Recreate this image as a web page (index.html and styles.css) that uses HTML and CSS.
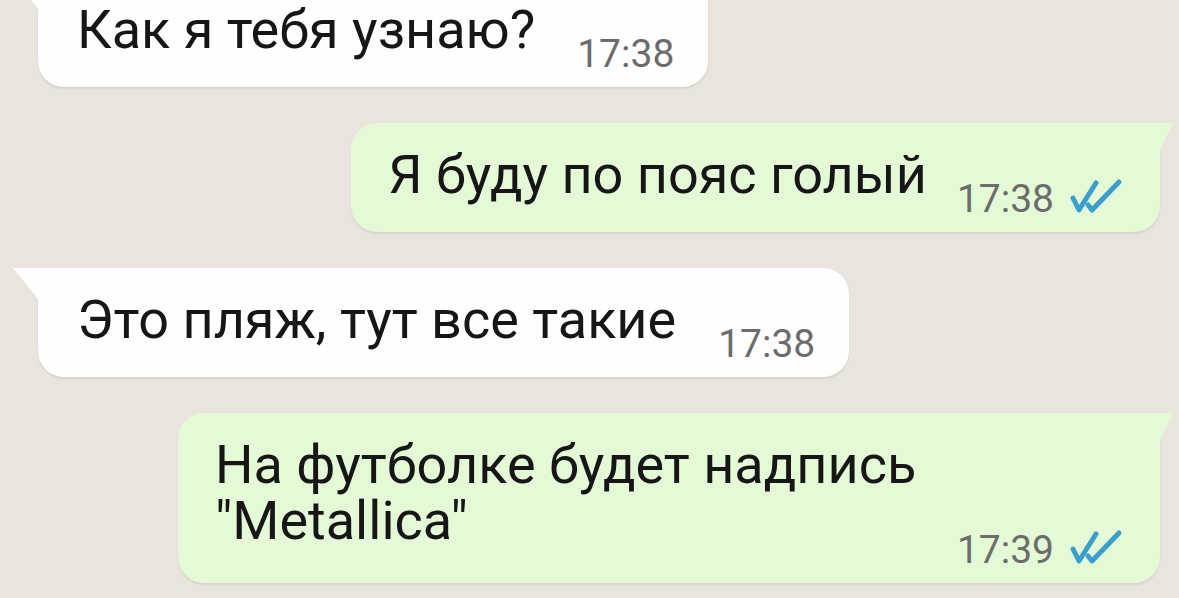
FILE: index.html
```html
<!DOCTYPE html>
<html lang="ru">
<head>
<meta charset="utf-8">
<title>Чат</title>
<link rel="stylesheet" href="styles.css">
</head>
<body>
<div class="chat">
  <div class="msg in first">
    <div class="text">Как я тебя узнаю?</div>
    <div class="meta"><span class="time">17:38</span></div>
  </div>
  <div class="msg out">
    <div class="text">Я буду по пояс голый</div>
    <div class="meta"><span class="time">17:38</span>
      <svg class="ticks" viewBox="0 0 54 36" aria-hidden="true"><path d="M4 20 L10 32 L27 5"/><path d="M19 27 L23 32 L50 4"/></svg>
    </div>
  </div>
  <div class="msg in">
    <div class="text">Это пляж, тут все такие</div>
    <div class="meta"><span class="time">17:38</span></div>
  </div>
  <div class="msg out tall">
    <div class="text">На футболке будет надпись "Metallica"</div>
    <div class="meta"><span class="time">17:39</span>
      <svg class="ticks" viewBox="0 0 54 36" aria-hidden="true"><path d="M4 20 L10 32 L27 5"/><path d="M19 27 L23 32 L50 4"/></svg>
    </div>
  </div>
</div>
</body>
</html>
```
FILE: styles.css
```css
html, body {
  margin: 0;
  height: 100%;
  overflow: hidden;
}
body {
  background: #e9e5de;
  font-family: Roboto, "Noto Sans", sans-serif;
}
.chat {
  display: flex;
  flex-direction: column;
  align-items: flex-start;
  gap: 36px;
  padding: 0 19px 0 38px;
}
.msg {
  position: relative;
  display: flex;
  align-items: flex-end;
  border-radius: 26px;
  padding: 24px 34px 14px 39px;
  box-shadow: 0 2px 2px rgba(0, 0, 0, 0.08);
}
.msg.first {
  margin-top: -22px;
}
.msg.in {
  background: #fefefe;
  border-top-left-radius: 0;
}
.msg.in::before {
  content: "";
  position: absolute;
  left: -25px;
  top: 0;
  width: 26px;
  height: 32px;
  background: #fefefe;
  clip-path: polygon(0 0, 100% 0, 100% 100%);
}
.msg.out {
  align-self: flex-end;
  background: #e4fad6;
  border-top-right-radius: 0;
  padding: 24px 37px 14px 37px;
}
.msg.out::before {
  content: "";
  position: absolute;
  right: -13px;
  top: 0;
  width: 14px;
  height: 30px;
  background: #e4fad6;
  clip-path: polygon(0 0, 100% 0, 0 100%);
}
.msg.tall {
  max-width: 982px;
  box-sizing: border-box;
}
.text {
  font-size: 54px;
  line-height: 56px;
  color: #161616;
  margin-bottom: 15px;
}
.msg.tall .text {
  margin-bottom: 20px;
}
.meta {
  display: flex;
  align-items: flex-end;
  margin-left: 42px;
  flex-shrink: 0;
}
.msg.out .meta {
  margin-left: 30px;
}
.time {
  font-size: 39px;
  line-height: 38px;
  color: #6c6c6c;
}
.ticks {
  width: 54px;
  height: 36px;
  margin-left: 15px;
  margin-bottom: 4px;
  fill: none;
  stroke: #3a9fce;
  stroke-width: 5;
  stroke-linecap: round;
  stroke-linejoin: round;
}
```
